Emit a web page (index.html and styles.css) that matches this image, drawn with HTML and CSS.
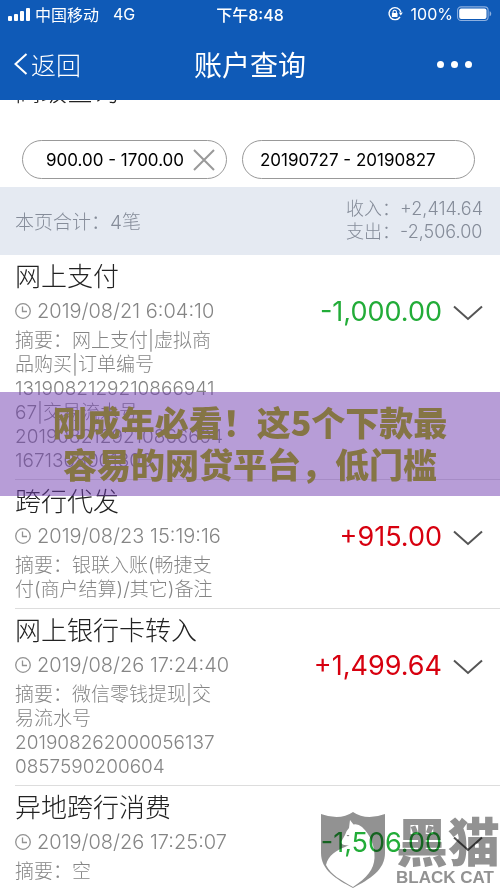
FILE: index.html
```html
<!DOCTYPE html>
<html lang="zh-CN">
<head>
<meta charset="utf-8">
<meta name="viewport" content="width=device-width, initial-scale=1">
<title>账户查询</title>
<link rel="stylesheet" href="styles.css">
</head>
<body>
<header class="top">
  <div class="status">
    <div class="status-left">
      <svg class="signal" viewBox="0 0 23 14" aria-hidden="true"><rect x="0" y="9" width="4" height="5" rx="1"/><rect x="6" y="7" width="4" height="7" rx="1"/><rect x="12" y="4" width="4" height="10" rx="1"/><rect x="18" y="1" width="4" height="13" rx="1"/></svg>
      <span>中国移动</span>
      <span class="network">4G</span>
    </div>
    <span class="clock">下午8:48</span>
    <div class="status-right">
      <svg class="lock" viewBox="0 0 16 16" aria-hidden="true"><path d="M13.8 6A6 6 0 1 0 13 11" fill="none" stroke="currentColor" stroke-width="1.4"/><path d="M11.8 6.4h4l-2 3z" fill="currentColor"/><rect x="4.9" y="7" width="5.6" height="4" rx=".5" fill="currentColor"/><path d="M6 7.4V6a1.7 1.7 0 0 1 3.4 0v1.4" fill="none" stroke="currentColor" stroke-width="1.1"/></svg>
      <span>100%</span>
      <svg class="battery" viewBox="0 0 35 16" aria-hidden="true"><rect x=".6" y=".9" width="30.5" height="13.6" rx="3.5" fill="none" stroke="#8db0e0" stroke-width="1.1"/><rect x="2.2" y="2.5" width="27.3" height="10.4" rx="2" fill="#fff"/><path d="M32.6 5.2c2.2.6 2.2 4.4 0 5z" fill="#8db0e0"/></svg>
    </div>
  </div>
  <nav class="nav">
    <button class="back" type="button">
      <svg viewBox="0 0 14 22" aria-hidden="true"><path d="M12.500 1 1.500 11l11 10"/></svg>返回
    </button>
    <h1 class="nav-title">账户查询</h1>
    <button class="more" type="button" aria-label="更多"><i></i><i></i><i></i></button>
  </nav>
</header>
<main>
  <section class="filters">
    <h2 class="filters-title">高级查询</h2>
    <div class="chips">
      <button class="chip chip-amount" type="button">900.00 - 1700.00
        <svg viewBox="0 0 22 22" aria-hidden="true"><path d="M1 1l20 20M21 1 1 21"/></svg>
      </button>
      <button class="chip chip-date" type="button">20190727 - 20190827</button>
    </div>
  </section>
  <section class="summary">
    <p class="count">本页合计：4笔</p>
    <p class="totals">收入：+2,414.64<br>支出：-2,506.00</p>
  </section>
  <ul class="list">
    <li class="item">
      <h3 class="name">网上支付</h3>
      <div class="row">
        <svg class="time-icon" viewBox="0 0 16 16" aria-hidden="true"><circle cx="8" cy="8" r="7.300"/><path d="M7.500 3.500V8.500H12"/></svg>
        <time>2019/08/21 6:04:10</time>
        <span class="amount out">-1,000.00</span>
        <button class="expand" type="button" aria-label="展开"><svg viewBox="0 0 30 16" aria-hidden="true"><path d="M1 1.500 15 14 29 1.500"/></svg></button>
      </div>
      <p class="memo">摘要：网上支付|虚拟商<br>品购买|订单编号<br>1319082129210866941<br>67|交易流水号<br>2019082129210866694<br>1671308001300</p>
    </li>
    <li class="item">
      <h3 class="name">跨行代发</h3>
      <div class="row">
        <svg class="time-icon" viewBox="0 0 16 16" aria-hidden="true"><circle cx="8" cy="8" r="7.300"/><path d="M7.500 3.500V8.500H12"/></svg>
        <time>2019/08/23 15:19:16</time>
        <span class="amount in">+915.00</span>
        <button class="expand" type="button" aria-label="展开"><svg viewBox="0 0 30 16" aria-hidden="true"><path d="M1 1.500 15 14 29 1.500"/></svg></button>
      </div>
      <p class="memo">摘要：银联入账(畅捷支<br>付(商户结算)/其它)备注</p>
    </li>
    <li class="item">
      <h3 class="name">网上银行卡转入</h3>
      <div class="row">
        <svg class="time-icon" viewBox="0 0 16 16" aria-hidden="true"><circle cx="8" cy="8" r="7.300"/><path d="M7.500 3.500V8.500H12"/></svg>
        <time>2019/08/26 17:24:40</time>
        <span class="amount in">+1,499.64</span>
        <button class="expand" type="button" aria-label="展开"><svg viewBox="0 0 30 16" aria-hidden="true"><path d="M1 1.500 15 14 29 1.500"/></svg></button>
      </div>
      <p class="memo">摘要：微信零钱提现|交<br>易流水号<br>201908262000056137<br>0857590200604</p>
    </li>
    <li class="item">
      <h3 class="name">异地跨行消费</h3>
      <div class="row">
        <svg class="time-icon" viewBox="0 0 16 16" aria-hidden="true"><circle cx="8" cy="8" r="7.300"/><path d="M7.500 3.500V8.500H12"/></svg>
        <time>2019/08/26 17:25:07</time>
        <span class="amount out">-1,506.00</span>
        <button class="expand" type="button" aria-label="展开"><svg viewBox="0 0 30 16" aria-hidden="true"><path d="M1 1.500 15 14 29 1.500"/></svg></button>
      </div>
      <p class="memo">摘要：空</p>
    </li>
  </ul>
</main>
<p class="banner">刚成年必看！这5个下款最<br>容易的网贷平台，低门槛</p>
<div class="watermark">
  <svg class="shield" viewBox="0 0 66 78" aria-hidden="true">
    <path d="M1 3Q20 10 33 1Q46 10 65 3V42C65 59 50 68 33 77C16 68 1 59 1 42Z" fill="#929292"/>
    <path d="M30 9 33.500 13.500Q38 12.500 42 16C51 24 55 36 54.500 47C54 58 47 67 33 76C21 69 11 64 6 54C8 44 17 39 25 36L29 34Q22 35 21 31L25 24Q26 20 29 17Z" fill="#fff"/>
    <path d="M26.500 24l3 0-1.500 1.500z" fill="#777"/>
  </svg>
  <div class="brand"><span class="brand-cn">黑猫</span><span class="brand-en">BLACK CAT</span></div>
</div>
</body>
</html>
```
FILE: styles.css
```css
* { box-sizing: border-box; }
body {
  margin: 0;
  position: relative;
  min-height: 100vh;
  background: #fff;
  color: #222;
  font-family: Inter, "Noto Sans CJK SC", sans-serif;
  font-weight: 300;
}
h1, h2, h3, p, ul { margin: 0; padding: 0; font-weight: 300; }
button { margin: 0; padding: 0; border: 0; background: none; color: inherit; font: inherit; }
svg { display: block; flex: none; }

.top { position: relative; z-index: 1; height: 100px; background: #0f5ab7; color: #fff; }
.status {
  display: grid;
  grid-template-columns: 1fr auto 1fr;
  align-items: center;
  height: 28px;
  padding: 0 8px;
  font-size: 16px;
  font-weight: 400;
}
.status-left, .status-right { display: flex; align-items: center; }
.status-right { justify-content: flex-end; }
.signal { width: 23px; height: 14px; margin-right: 4px; fill: #fff; }
.network { margin-left: 14px; }
.clock { font-weight: 500; }
.lock { width: 16px; height: 16px; margin-right: 8px; }
.battery { width: 35px; height: 16px; margin-left: 4px; }
.nav {
  display: grid;
  grid-template-columns: 1fr auto 1fr;
  align-items: center;
  height: 72px;
  padding: 0 28px 0 14px;
}
.back { display: flex; align-items: center; gap: 3px; justify-self: start; font-size: 25px; }
.back svg { width: 14px; height: 22px; fill: none; stroke: #fff; stroke-width: 2; }
.nav-title { padding-left: 14px; font-size: 28px; font-weight: 400; }
.more { display: flex; gap: 7px; justify-self: end; }
.more i { width: 7px; height: 7px; border-radius: 50%; background: #fff; }

.filters-title { height: 40px; margin-top: -32px; padding-left: 15px; font-size: 26px; line-height: 48px; }
.chips { display: grid; grid-template-columns: 205fr 233fr; gap: 15px; padding: 32px 25px 8px 22px; }
.chip {
  display: flex;
  align-items: center;
  height: 39px;
  border: 1px solid #999;
  border-radius: 20px;
  color: #000;
  font-size: 17px;
  font-weight: 400;
  white-space: nowrap;
}
.chip-amount { justify-content: space-between; padding: 0 11px 0 23px; }
.chip-amount svg { width: 22px; height: 22px; fill: none; stroke: #999; stroke-width: 2; }
.chip-date { padding-left: 17px; }

.summary {
  display: flex;
  align-items: center;
  justify-content: space-between;
  height: 68px;
  padding: 0 17px 2px 15px;
  background: #e5eaf2;
  color: #858c99;
}
.count { font-size: 19px; }
.totals { font-size: 18px; line-height: 23px; }

.list { list-style: none; }
.item { margin-left: 15px; padding: 3px 0 6px; border-bottom: 1px solid #ddd; }
.item:last-child { border-bottom: 0; }
.name { font-size: 26px; line-height: 38px; }
.row { display: flex; align-items: center; height: 30px; padding-right: 17px; color: #858585; font-size: 20px; }
.time-icon { width: 16px; height: 16px; margin-right: 6px; fill: none; stroke: #929292; stroke-width: 1.3; }
.amount { margin-left: auto; font-size: 27px; font-weight: 400; }
.out { color: #22ac38; }
.in { color: #d7000f; }
.expand { margin: 4px 0 0 11px; }
.expand svg { width: 30px; height: 16px; fill: none; stroke: #555; stroke-width: 2; }
.memo { margin-top: 3px; color: #858585; font-size: 19px; line-height: 24px; }

.banner {
  position: absolute;
  top: 392px;
  left: 0;
  right: 0;
  padding: 9px 0 11px;
  background: rgba(112, 60, 176, .5);
  color: #857545;
  font-family: "Noto Sans CJK SC", sans-serif;
  font-size: 34px;
  font-weight: 900;
  line-height: 42px;
  text-align: center;
}
.watermark {
  position: absolute;
  top: 811px;
  right: 0;
  display: flex;
  gap: 10px;
  color: #929292;
  font-weight: 900;
  mix-blend-mode: multiply;
}
.shield { width: 66px; height: 78px; }
.brand { display: flex; flex-direction: column; }
.brand-cn { font-family: "Noto Sans CJK SC", sans-serif; font-size: 52px; line-height: 58px; }
.brand-en { font-family: "Liberation Sans", sans-serif; font-size: 17px; line-height: 18px; }
```
